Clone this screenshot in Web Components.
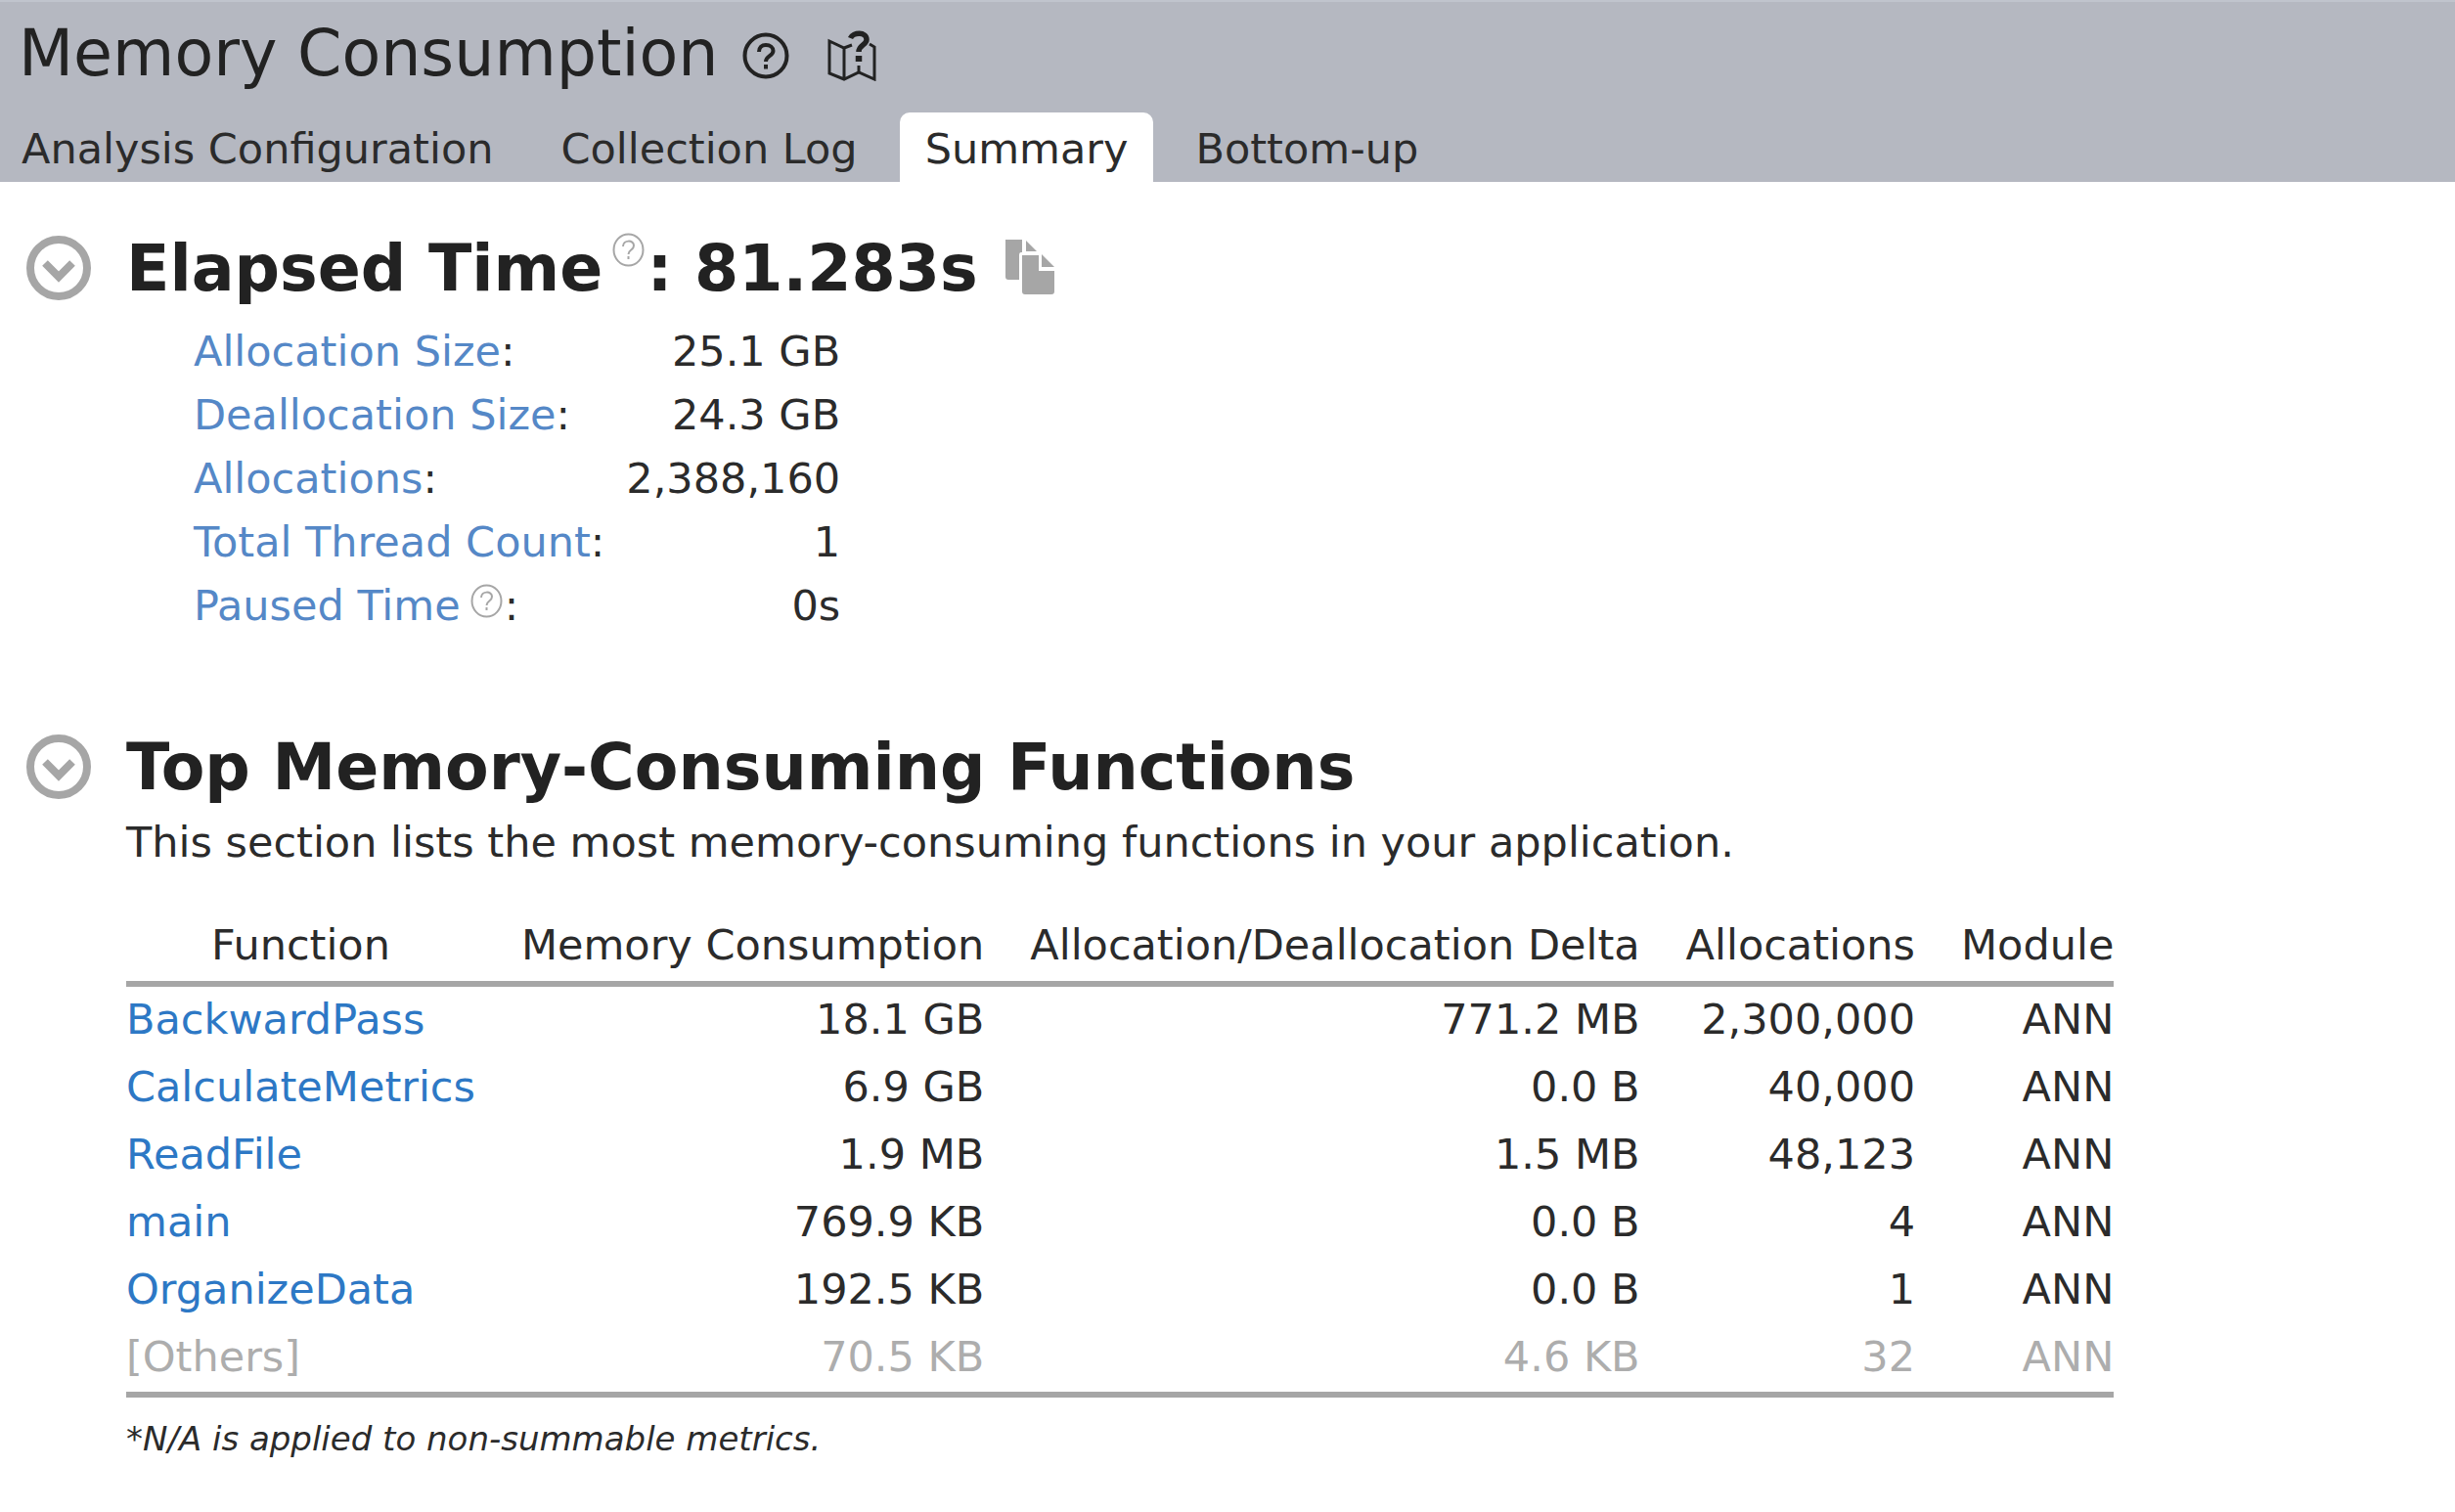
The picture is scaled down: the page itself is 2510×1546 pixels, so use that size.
<!DOCTYPE html>
<html lang="en">
<head>
<meta charset="utf-8">
<title>Memory Consumption</title>
<style>
  html, body { margin: 0; }
  body {
    background: #fff;
    color: #2b2b2b;
    font-family: "DejaVu Sans", sans-serif;
    font-size: 43px;
    line-height: 60px;
    --muted: #a6a6a6;
    --ink: #222;
  }
</style>
</head>
<body>
<vt-header>
  <span slot="title">Memory Consumption</span>
  <vt-tab>Analysis Configuration</vt-tab>
  <vt-tab>Collection Log</vt-tab>
  <vt-tab selected>Summary</vt-tab>
  <vt-tab>Bottom-up</vt-tab>
</vt-header>
<vt-summary>
  <vt-section>
    <span slot="heading">Elapsed Time<vt-hint></vt-hint>: 81.283s<vt-copy></vt-copy></span>
    <vt-metrics></vt-metrics>
  </vt-section>
  <vt-section>
    <span slot="heading">Top Memory-Consuming Functions</span>
    <span slot="description">This section lists the most memory-consuming functions in your application.</span>
    <vt-functions></vt-functions>
  </vt-section>
</vt-summary>

<script>
const RESET = `
  button { font: inherit; color: inherit; background: none; border: 0; margin: 0; padding: 0; cursor: pointer; }
  svg { display: block; }
  a { text-decoration: none; }
`;

class Base extends HTMLElement {
  constructor() {
    super();
    this.attachShadow({ mode: "open" }).innerHTML = `<style>${RESET}</style>` + this.view();
  }
}

customElements.define("vt-header", class extends Base {
  view() {
    return `
    <style>
      :host { display: block; background: #b5b8c1; box-shadow: inset 0 2px #c0c4cd; }
      .bar { display: flex; align-items: center; gap: 24px; padding: 15px 19px 20px; color: var(--ink); }
      h1 { margin: 0; font-size: 65px; line-height: 80px; font-weight: 400; }
      .bar button { padding-top: 4px; }
      .tabs { display: flex; gap: 17px; margin-left: -4px; }
      .bar .map { margin-left: 14px; }
    </style>
    <div class="bar">
      <h1><slot name="title"></slot></h1>
      <button aria-label="Help">
        <svg width="48" height="48" viewBox="0 0 48 48" fill="none" stroke="#222" stroke-width="4">
          <circle cx="24" cy="24" r="21.500"/>
          <path d="M17 20C17 15.500 20 13 24 13C28.500 13 31.500 15.500 31.500 19C31.500 24.500 24 24 24 30"/>
          <path d="M24 33V37.500" stroke-width="4"/>
        </svg>
      </button>
      <button class="map" aria-label="Tour">
        <svg width="52" height="52" viewBox="0 0 52 52" fill="none" stroke="#222" stroke-width="3">
          <path d="M26 15L18 18L3 11V44L18 50L33 43L49 50V17L44 14M18 18V50M33 36V43"/>
          <path d="M24.500 8C27 2 41 1 41 9.500C41 15 33 15 33 22" stroke-width="5.500"/>
          <path d="M33 26V32" stroke-width="6.500"/>
        </svg>
      </button>
    </div>
    <div class="tabs" role="tablist"><slot></slot></div>`;
  }
});

customElements.define("vt-tab", class extends Base {
  view() {
    return `
    <style>
      :host { display: block; }
      button { display: block; padding: 7px 26px 4px; line-height: 60px; border-radius: 10px 10px 0 0; white-space: nowrap; }
      :host([selected]) button { background: #fff; }
    </style>
    <button role="tab"><slot></slot></button>`;
  }
});

customElements.define("vt-summary", class extends Base {
  view() {
    return `
    <style>
      :host { display: flex; flex-direction: column; gap: 93px; padding: 49px 27px; }
    </style>
    <slot></slot>`;
  }
});

customElements.define("vt-section", class extends Base {
  view() {
    return `
    <style>
      :host { display: flex; align-items: flex-start; gap: 36px; }
      button { padding: 6px 0; }
      h2 { margin: 0; font-size: 65px; line-height: 80px; color: var(--ink); }
      p { margin: 6px 0 45px; }
      p:not(.on) { display: none; }
      .body { flex: 1; }
    </style>
    <button aria-label="Collapse section">
      <svg width="66" height="66" viewBox="0 0 66 66" fill="none" stroke="#a6a6a6" stroke-width="8">
        <circle cx="33" cy="33" r="29"/>
        <path d="M19 28L33 42L47 28"/>
      </svg>
    </button>
    <div class="body">
      <h2><slot name="heading"></slot></h2>
      <p><slot name="description"></slot></p>
      <slot></slot>
    </div>`;
  }
  connectedCallback() {
    const slot = this.shadowRoot.querySelector("slot[name=description]");
    const sync = () => slot.parentNode.classList.toggle("on", slot.assignedNodes().length > 0);
    slot.addEventListener("slotchange", sync);
    sync();
  }
});

customElements.define("vt-hint", class extends Base {
  view() {
    return `
    <style>
      :host { display: inline-block; padding: 0 2px 0 10px; line-height: 0; vertical-align: var(--hint-lift, 24px); }
    </style>
    <button aria-label="About this metric">
      <svg width="33" height="35" viewBox="0 0 33 35" fill="none" stroke="#a6a6a6" stroke-width="2">
        <ellipse cx="16.500" cy="17.500" rx="15" ry="16"/>
        <path d="M11 14C11 7 22 7 22 13C22 18 16.500 17 16.500 22M16.500 24V27"/>
      </svg>
    </button>`;
  }
});

customElements.define("vt-copy", class extends Base {
  view() {
    return `
    <style>
      :host { display: inline-block; padding-left: 28px; line-height: 0; vertical-align: -4px; }
    </style>
    <button aria-label="Copy to clipboard">
      <svg width="50" height="56" viewBox="0 0 50 56" fill="#a6a6a6">
        <path d="M0 0H17V13H16Q14 13 14 16V41H3Q0 41 0 38Z"/>
        <path d="M21 1L32 12H21Z"/>
        <path d="M17 16H34V32H50V53Q50 56 47 56H20Q17 56 17 53Z"/>
        <path d="M37 15L50 28H37Z"/>
      </svg>
    </button>`;
  }
});

const METRICS = [
  ["Allocation Size", "25.1 GB"],
  ["Deallocation Size", "24.3 GB"],
  ["Allocations", "2,388,160"],
  ["Total Thread Count", "1"],
  ["Paused Time", "0s", true],
];

customElements.define("vt-metrics", class extends Base {
  view() {
    return `
    <style>
      :host { display: block; margin: 12px 0 0 69px; --hint-lift: 2px; }
      table { border-collapse: collapse; line-height: 65px; }
      th, td { padding: 0; font-weight: 400; text-align: left; white-space: nowrap; }
      td { padding-left: 22px; text-align: right; }
      a { color: #5588c7; }
    </style>
    <table>${METRICS.map(([name, value, hint]) => `
      <tr><th scope="row"><a href="#">${name}</a>${hint ? "<vt-hint></vt-hint>" : ""}:</th><td>${value}</td></tr>`).join("")}
    </table>`;
  }
});

const COLUMNS = ["Function", "Memory Consumption", "Allocation/Deallocation Delta", "Allocations", "Module"];
const FUNCTIONS = [
  ["BackwardPass", "18.1 GB", "771.2 MB", "2,300,000", "ANN"],
  ["CalculateMetrics", "6.9 GB", "0.0 B", "40,000", "ANN"],
  ["ReadFile", "1.9 MB", "1.5 MB", "48,123", "ANN"],
  ["main", "769.9 KB", "0.0 B", "4", "ANN"],
  ["OrganizeData", "192.5 KB", "0.0 B", "1", "ANN"],
  ["[Others]", "70.5 KB", "4.6 KB", "32", "ANN"],
];

customElements.define("vt-functions", class extends Base {
  view() {
    const row = ([name, ...rest]) => {
      const others = name === "[Others]";
      return `<tr${others ? ' class="others"' : ""}><td>${others ? name : `<a href="#">${name}</a>`}</td>${rest.map(v => `<td>${v}</td>`).join("")}</tr>`;
    };
    return `
    <style>
      :host { display: block; }
      table { border-spacing: 0; border-bottom: 6px solid var(--muted); }
      th, td { padding: 0 0 3px 47px; font-weight: 400; text-align: right; white-space: nowrap; line-height: 66px; }
      th { padding-bottom: 7px; line-height: 60px; border-bottom: 6px solid var(--muted); }
      th:first-child { padding-left: 0; text-align: center; }
      td:first-child { padding-left: 0; text-align: left; }
      a { color: #2d78c5; }
      .others { color: #adadad; }
      small { display: block; margin-top: 12px; font-size: 34px; font-style: italic; }
    </style>
    <table>
      <thead><tr>${COLUMNS.map(c => `<th scope="col">${c}</th>`).join("")}</tr></thead>
      <tbody>${FUNCTIONS.map(row).join("")}</tbody>
    </table>
    <small>*N/A is applied to non-summable metrics.</small>`;
  }
});
</script>
</body>
</html>
